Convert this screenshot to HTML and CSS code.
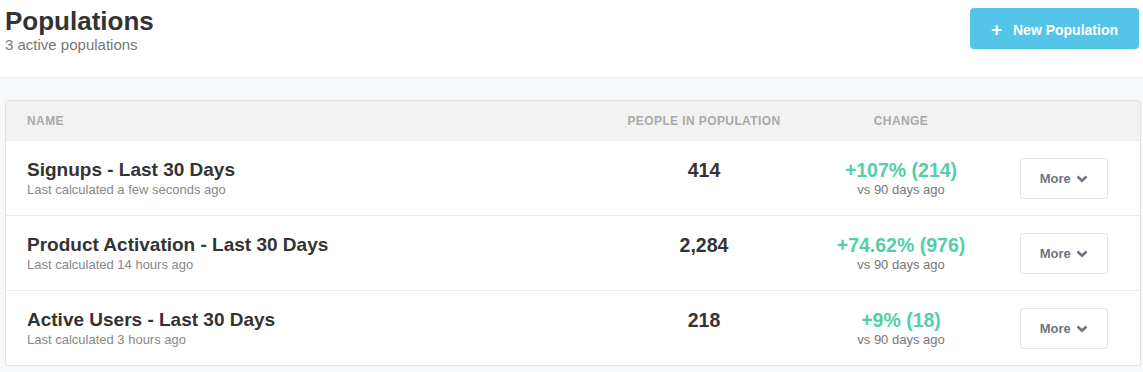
FILE: index.html
```html
<!DOCTYPE html>
<html lang="en">
<head>
    <meta charset="UTF-8">
    <title>Populations</title>
    <link rel="stylesheet" href="styles.css">
</head>
<body>
    <div class="topbar">
        <div class="heading">
            <h1>Populations</h1>
            <div class="sub">3 active populations</div>
        </div>
        <button class="btn-new"><span class="plus">+</span> New Population</button>
    </div>

    <div class="content">
        <div class="table">
            <div class="row head">
                <div class="cell name">Name</div>
                <div class="cell center">People in Population</div>
                <div class="cell center">Change</div>
                <div class="cell"></div>
            </div>

            <div class="row">
                <div class="cell name">
                    <div class="title">Signups - Last 30 Days</div>
                    <div class="meta">Last calculated a few seconds ago</div>
                </div>
                <div class="cell center"><div class="count">414</div></div>
                <div class="cell center">
                    <div class="change">+107% (214)</div>
                    <div class="meta vs">vs 90 days ago</div>
                </div>
                <div class="cell action">
                    <button class="btn-more">More <svg width="12" height="8" viewBox="0 0 12 8"><path d="M1.5 1.5 L6 5.8 L10.5 1.5" fill="none" stroke="currentColor" stroke-width="2.6"/></svg></button>
                </div>
            </div>

            <div class="row">
                <div class="cell name">
                    <div class="title">Product Activation - Last 30 Days</div>
                    <div class="meta">Last calculated 14 hours ago</div>
                </div>
                <div class="cell center"><div class="count">2,284</div></div>
                <div class="cell center">
                    <div class="change">+74.62% (976)</div>
                    <div class="meta vs">vs 90 days ago</div>
                </div>
                <div class="cell action">
                    <button class="btn-more">More <svg width="12" height="8" viewBox="0 0 12 8"><path d="M1.5 1.5 L6 5.8 L10.5 1.5" fill="none" stroke="currentColor" stroke-width="2.6"/></svg></button>
                </div>
            </div>

            <div class="row">
                <div class="cell name">
                    <div class="title">Active Users - Last 30 Days</div>
                    <div class="meta">Last calculated 3 hours ago</div>
                </div>
                <div class="cell center"><div class="count">218</div></div>
                <div class="cell center">
                    <div class="change">+9% (18)</div>
                    <div class="meta vs">vs 90 days ago</div>
                </div>
                <div class="cell action">
                    <button class="btn-more">More <svg width="12" height="8" viewBox="0 0 12 8"><path d="M1.5 1.5 L6 5.8 L10.5 1.5" fill="none" stroke="currentColor" stroke-width="2.6"/></svg></button>
                </div>
            </div>
        </div>
    </div>
</body>
</html>
```

FILE: styles.css
```css
body {
    margin: 0;
    font-family: "Liberation Sans", Arial, sans-serif;
    background-color: #f7f8fa;
    color: #333;
}
.topbar {
    display: flex;
    justify-content: space-between;
    align-items: flex-start;
    height: 77px;
    padding: 0 4px 0 5px;
    background-color: #fff;
    border-bottom: 1px solid #ebecef;
}
.heading h1 {
    margin: 6px 0 0;
    font-size: 26px;
    line-height: 30px;
    font-weight: bold;
    color: #333;
}
.heading .sub {
    font-size: 15px;
    line-height: 18px;
    color: #777;
}
.btn-new {
    margin-top: 8px;
    width: 169px;
    height: 41px;
    border: none;
    border-radius: 4px;
    background-color: #54c4e9;
    color: #fff;
    font-family: inherit;
    font-size: 14px;
    font-weight: bold;
    cursor: pointer;
}
.btn-new .plus {
    font-size: 19px;
    margin-right: 7px;
    position: relative;
    top: 1px;
}
.content {
    padding: 22px 2px 8px 5px;
}
.table {
    background-color: #fff;
    border: 1px solid #e3e3e3;
    border-radius: 3px;
    overflow: hidden;
}
.row {
    display: grid;
    grid-template-columns: 1fr 156px 238px 120px;
    align-items: center;
    height: 74px;
    border-top: 1px solid #ebebeb;
}
.row.head {
    height: 39px;
    border-top: none;
    background-color: #f2f2f2;
    font-size: 12px;
    letter-spacing: 0.4px;
    font-weight: bold;
    color: #a9a9a9;
    text-transform: uppercase;
}
.cell.name {
    padding-left: 21px;
}
.cell.center {
    text-align: center;
}
.title {
    font-size: 19px;
    font-weight: bold;
    line-height: 22px;
    color: #333;
}
.meta {
    font-size: 13px;
    line-height: 17px;
    color: #888;
}
.meta.vs {
    color: #777;
}
.count {
    font-size: 19.5px;
    font-weight: bold;
    line-height: 22px;
    margin-bottom: 16px;
    color: #333;
}
.change {
    font-size: 19.5px;
    font-weight: bold;
    line-height: 22px;
    color: #52cfa6;
}
.btn-more {
    width: 88px;
    height: 41px;
    background-color: #fff;
    border: 1px solid #e6e6e6;
    border-radius: 3px;
    color: #6f7480;
    font-family: inherit;
    font-size: 13px;
    font-weight: bold;
    cursor: pointer;
}
.btn-more svg {
    margin-left: 2px;
}
```
